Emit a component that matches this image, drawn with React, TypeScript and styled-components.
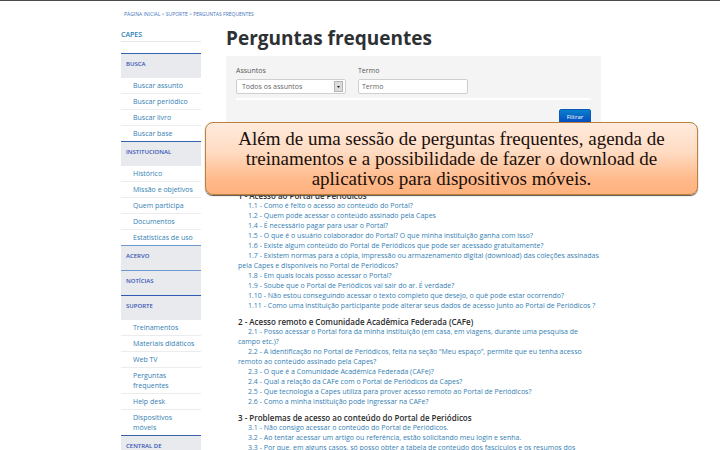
import React from "react";
import styled, { createGlobalStyle } from "styled-components";

const GlobalStyle = createGlobalStyle`
  * { box-sizing: border-box; }
  body {
    margin: 0;
    background: #ffffff;
    font-family: "Open Sans", "Noto Sans", sans-serif;
  }
`;

const Page = styled.div`
  position: relative;
  height: 100vh;
  overflow: hidden;
  border-top: 1px solid #4a4a4a;
`;

const Container = styled.div`
  max-width: 482px;
  margin: 0 auto;
  padding-left: 2px;
`;

const Breadcrumb = styled.nav`
  padding: 8px 3px 0;
  font-size: 5px;
  line-height: 10px;
  font-weight: 500;
  color: #3f74bb;
  white-space: nowrap;

  a { color: inherit; text-decoration: none; }
`;

const Columns = styled.div`
  display: grid;
  grid-template-columns: 80px minmax(0, 1fr);
  column-gap: 25px;
  padding-top: 5px;
`;

const Brand = styled.a`
  display: block;
  height: 18px;
  margin-bottom: 11px;
  padding-top: 6px;
  border-bottom: 1px solid #e6e6e6;
  font-size: 7px;
  line-height: 10px;
  font-weight: 600;
  color: #2a7fb4;
  text-decoration: none;
`;

const SideHeading = styled.h2<{ $line: string }>`
  height: 25px;
  margin: 0;
  padding: 5px 5px 0;
  border-top: 1px solid ${(p) => p.$line};
  background: #e9eaee;
  font-size: 6px;
  line-height: 10px;
  font-weight: 600;
  color: #3553b5;
  white-space: nowrap;
`;

const SideList = styled.ul`
  margin: 0;
  padding: 0;
  list-style: none;
`;

const SideItem = styled.li`
  padding: 3px 12px 2px;
  font-size: 7px;
  line-height: 10px;

  & + & { border-top: 1px solid #ececec; }
  a { color: #3480b4; text-decoration: none; white-space: nowrap; }
`;

const Title = styled.h1`
  margin: 0 0 4px;
  font-size: 19px;
  line-height: 28px;
  font-weight: 700;
  color: #2e3133;
  white-space: nowrap;
`;

const Filter = styled.form`
  height: 74px;
  padding: 10px 10px 0;
  background: #f4f4f4;
`;

const Fields = styled.div`
  display: grid;
  grid-template-columns: 110px 110px;
  column-gap: 12px;
  padding-bottom: 4px;
  border-bottom: 2px solid #ffffff;
`;

const Field = styled.label`
  display: block;
  font-size: 7px;
  line-height: 10px;
  color: #55585a;
`;

const SelectBox = styled.span`
  position: relative;
  display: block;
  margin-top: 3px;

  svg { position: absolute; top: 2px; right: 3px; pointer-events: none; }
`;

const Select = styled.select`
  display: block;
  width: 100%;
  height: 15px;
  padding: 0 5px;
  appearance: none;
  border: 1px solid #cfcfcf;
  border-radius: 2px;
  background: #ffffff;
  font: inherit;
  color: #666666;
`;

const Input = styled.input`
  display: block;
  width: 100%;
  height: 15px;
  margin-top: 3px;
  padding: 0 3px;
  border: 1px solid #cfcfcf;
  border-radius: 2px;
  background: #ffffff;
  font: inherit;
  color: #555555;

  &::placeholder { color: #666666; opacity: 1; }
`;

const Submit = styled.button`
  display: block;
  width: 32px;
  height: 15px;
  margin: 9px 0 0 auto;
  padding: 0;
  border: 1px solid #0a58b8;
  border-radius: 2px;
  background: linear-gradient(#0a80cc, #0648bd);
  font-family: inherit;
  font-size: 6px;
  line-height: 12px;
  color: #ffffff;
`;

const Faq = styled.div`
  padding: 61px 0 0 12px;
`;

const FaqHeading = styled.h3`
  margin: 0;
  font-size: 8px;
  line-height: 10px;
  font-weight: 600;
  color: #2b2b2b;
  white-space: nowrap;
`;

const FaqList = styled.ul`
  margin: 0 0 6px;
  padding: 0;
  list-style: none;
`;

const FaqItem = styled.li`
  font-size: 7px;
  line-height: 10px;
  text-indent: 10px;
  white-space: nowrap;

  a { color: #3480b4; text-decoration: none; }
`;

const Callout = styled.aside`
  position: absolute;
  top: 121px;
  left: 205px;
  right: 22px;
  padding: 6px 12px 5px;
  border: 1px solid #bd7f3c;
  border-radius: 8px;
  background: linear-gradient(#ffebdd 0%, #ffdcc3 40%, #ffb98a 80%, #ffb27e 100%);
  box-shadow: 0 1px 1px #5b5048;
  font-family: "Palatino Linotype", "Book Antiqua", "Liberation Serif", serif;
  font-size: 19px;
  line-height: 20px;
  text-align: center;
  color: #1a0f0a;
`;

const sideSections = [
  {
    title: "BUSCA",
    line: "#3a62a8",
    items: ["Buscar assunto", "Buscar periódico", "Buscar livro", "Buscar base"],
  },
  {
    title: "INSTITUCIONAL",
    line: "#3a62a8",
    items: ["Histórico", "Missão e objetivos", "Quem participa", "Documentos", "Estatísticas de uso"],
  },
  { title: "ACERVO", line: "#6f97d0", items: [] },
  { title: "NOTÍCIAS", line: "#6f97d0", items: [] },
  {
    title: "SUPORTE",
    line: "#2f5bb5",
    items: ["Treinamentos", "Materiais didáticos", "Web TV", "Perguntas\nfrequentes", "Help desk", "Dispositivos\nmóveis"],
  },
  { title: "CENTRAL DE", line: "#3a62a8", items: [] },
];

const faqSections = [
  {
    title: "1 - Acesso ao Portal de Periódicos",
    items: [
      "1.1 - Como é feito o acesso ao conteúdo do Portal?",
      "1.2 - Quem pode acessar o conteúdo assinado pela Capes",
      "1.4 - É necessário pagar para usar o Portal?",
      "1.5 - O que é o usuário colaborador do Portal? O que minha instituição ganha com isso?",
      "1.6 - Existe algum conteúdo do Portal de Periódicos que pode ser acessado gratuitamente?",
      "1.7 - Existem normas para a cópia, impressão ou armazenamento digital (download) das coleções assinadas\npela Capes e disponíveis no Portal de Periódicos?",
      "1.8 - Em quais locais posso acessar o Portal?",
      "1.9 - Soube que o Portal de Periódicos vai sair do ar. É verdade?",
      "1.10 - Não estou conseguindo acessar o texto completo que desejo, o quê pode estar ocorrendo?",
      "1.11 - Como uma instituição participante pode alterar seus dados de acesso junto ao Portal de Periódicos ?",
    ],
  },
  {
    title: "2 - Acesso remoto e Comunidade Acadêmica Federada (CAFe)",
    items: [
      "2.1 - Posso acessar o Portal fora da minha instituição (em casa, em viagens, durante uma pesquisa de\ncampo etc.)?",
      "2.2 - A identificação no Portal de Periódicos, feita na seção “Meu espaço”, permite que eu tenha acesso\nremoto ao conteúdo assinado pela Capes?",
      "2.3 - O que é a Comunidade Acadêmica Federada (CAFe)?",
      "2.4 - Qual a relação da CAFe com o Portal de Periódicos da Capes?",
      "2.5 - Que tecnologia a Capes utiliza para prover acesso remoto ao Portal de Periódicos?",
      "2.6 - Como a minha instituição pode ingressar na CAFe?",
    ],
  },
  {
    title: "3 - Problemas de acesso ao conteúdo do Portal de Periódicos",
    items: [
      "3.1 - Não consigo acessar o conteúdo do Portal de Periódicos.",
      "3.2 - Ao tentar acessar um artigo ou referência, estão solicitando meu login e senha.",
      "3.3 - Por que, em alguns casos, só posso obter a tabela de conteúdo dos fascículos e os resumos dos",
    ],
  },
];

const withBreaks = (text: string) =>
  text.split("\n").map((line, i) => (
    <React.Fragment key={line}>
      {i > 0 && <br />}
      {line}
    </React.Fragment>
  ));

export default function App() {
  return (
    <Page>
      <GlobalStyle />
      <Container>
        <Breadcrumb>
          <a href="#inicio">PÁGINA INICIAL</a> &gt; <a href="#suporte">SUPORTE</a> &gt;{" "}
          <a href="#perguntas">PERGUNTAS FREQUENTES</a>
        </Breadcrumb>
        <Columns>
          <nav>
            <Brand href="#capes">CAPES</Brand>
            {sideSections.map((section) => (
              <section key={section.title}>
                <SideHeading $line={section.line}>{section.title}</SideHeading>
                {section.items.length > 0 && (
                  <SideList>
                    {section.items.map((item) => (
                      <SideItem key={item}>
                        <a href="#item">{withBreaks(item)}</a>
                      </SideItem>
                    ))}
                  </SideList>
                )}
              </section>
            ))}
          </nav>
          <main>
            <Title>Perguntas frequentes</Title>
            <Filter onSubmit={(e) => e.preventDefault()}>
              <Fields>
                <Field>
                  Assuntos
                  <SelectBox>
                    <Select>
                      <option>Todos os assuntos</option>
                    </Select>
                    <svg width="9" height="11" viewBox="0 0 9 11" aria-hidden="true">
                      <rect x="0.5" y="0.5" width="8" height="10" fill="#dcdcdc" stroke="#b4b4b4" />
                      <path d="M3 5h3l-1.5 2z" fill="#222222" />
                    </svg>
                  </SelectBox>
                </Field>
                <Field>
                  Termo
                  <Input type="text" placeholder="Termo" />
                </Field>
              </Fields>
              <Submit type="submit">Filtrar</Submit>
            </Filter>
            <Faq>
              {faqSections.map((section) => (
                <section key={section.title}>
                  <FaqHeading>{section.title}</FaqHeading>
                  <FaqList>
                    {section.items.map((item) => (
                      <FaqItem key={item}>
                        <a href="#pergunta">{withBreaks(item)}</a>
                      </FaqItem>
                    ))}
                  </FaqList>
                </section>
              ))}
            </Faq>
          </main>
        </Columns>
      </Container>
      <Callout>
        Além de uma sessão de perguntas frequentes, agenda de
        <br />
        treinamentos e a possibilidade de fazer o download de
        <br />
        aplicativos para dispositivos móveis.
      </Callout>
    </Page>
  );
}
